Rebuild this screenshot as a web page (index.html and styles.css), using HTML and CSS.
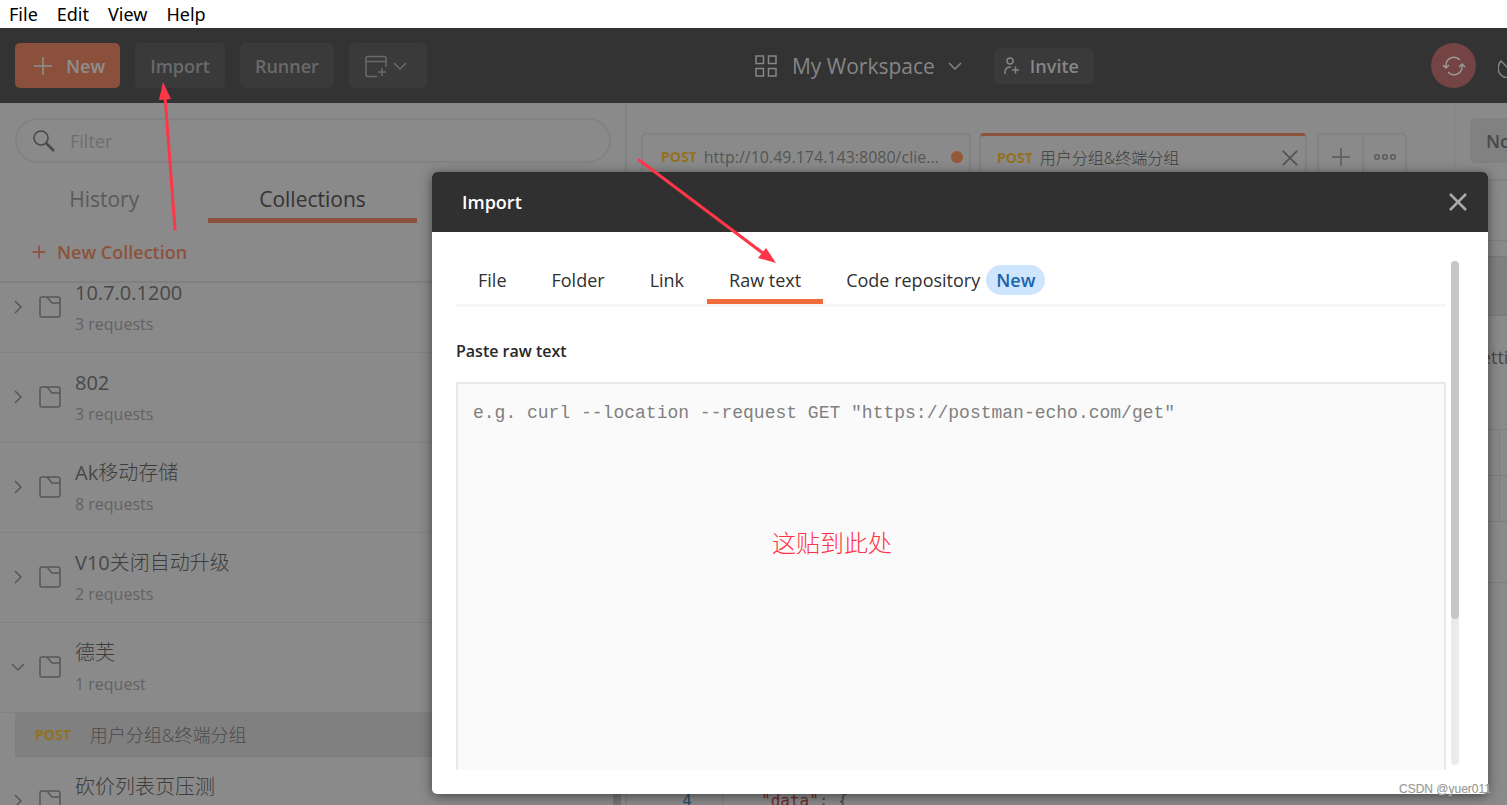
FILE: index.html
```html
<!DOCTYPE html>
<html lang="en">
<head>
<meta charset="utf-8">
<title>Import</title>
<link rel="stylesheet" href="styles.css">
</head>
<body>
<svg class="defs" width="0" height="0" aria-hidden="true">
  <symbol id="folder" viewBox="0 0 22 22"><path d="M3 1h16q2 0 2 2v16q0 2-2 2H3q-2 0-2-2V3q0-2 2-2zM8 1l5 6h8"/></symbol>
  <symbol id="right" viewBox="0 0 14 14"><path d="M4 1l6 6-6 6"/></symbol>
  <symbol id="down" viewBox="0 0 14 14"><path d="M1 4l6 6 6-6"/></symbol>
  <symbol id="close" viewBox="0 0 20 20"><path d="M2 2l16 16M18 2L2 18"/></symbol>
  <symbol id="plus" viewBox="0 0 20 20"><path d="M10 1v18M1 10h18"/></symbol>
</svg>

<nav class="menubar">
  <a href="#">File</a><a href="#">Edit</a><a href="#">View</a><a href="#">Help</a>
</nav>

<header class="header">
  <div class="actions">
    <button class="btn btn-new" type="button"><svg class="i20"><use href="#plus"/></svg>New</button>
    <button class="btn" type="button">Import</button>
    <button class="btn" type="button">Runner</button>
    <button class="btn btn-window" type="button" aria-label="Open new window">
      <svg class="i24" viewBox="0 0 24 24"><path d="M13 22.500H4q-2 0-2-2v-16q0-2 2-2h16q2 0 2 2V13M2 7.500h20M18 14v8M14 18h8"/></svg>
      <svg class="i14"><use href="#down"/></svg>
    </button>
  </div>
  <div class="workspace">
    <button class="workspace-name" type="button">
      <svg class="i22" viewBox="0 0 22 22"><path d="M1 1h7.500v7.500H1zM13.500 1H21v7.500h-7.500zM1 13.500h7.500V21H1zM13.500 13.500H21V21h-7.500z"/></svg>
      <span>My Workspace</span>
      <svg class="i14"><use href="#down"/></svg>
    </button>
    <button class="btn btn-invite" type="button">
      <svg class="i18" viewBox="0 0 18 18"><circle cx="7" cy="4" r="3"/><path d="M2 17v-2q0-5 6-5M12.500 9.500v7M9 13h7"/></svg>Invite
    </button>
  </div>
  <div class="status">
    <button class="sync" type="button" aria-label="Sync">
      <svg class="i24" viewBox="0 0 24 24"><path d="M4 14V11a8 8 0 0 1 14-5M1 11l3 3 3-3M20 10v3a8 8 0 0 1-14 5M17 13l3-3 3 3"/></svg>
    </button>
    <svg class="i24 satellite" viewBox="0 0 24 24"><path d="M3 7a9 9 0 1 0 14 14L3 7zM11 13l5-5"/></svg>
  </div>
</header>

<main class="main">
  <aside class="sidebar">
    <label class="filter">
      <svg class="i22" viewBox="0 0 22 22"><circle cx="8" cy="8" r="7"/><path class="handle" d="M13 13l8 8"/></svg>
      <input type="text" placeholder="Filter" aria-label="Filter">
    </label>
    <nav class="side-tabs">
      <a href="#">History</a><a href="#" class="on">Collections</a>
    </nav>
    <div class="new-row"><button type="button"><svg class="i14"><use href="#plus"/></svg>New Collection</button></div>
    <div class="scroller">
      <ul class="collections">
        <li class="collection"><svg class="i14"><use href="#right"/></svg><svg class="i22"><use href="#folder"/></svg><div><h3>10.7.0.1200</h3><p>3 requests</p></div></li>
        <li class="collection"><svg class="i14"><use href="#right"/></svg><svg class="i22"><use href="#folder"/></svg><div><h3>802</h3><p>3 requests</p></div></li>
        <li class="collection"><svg class="i14"><use href="#right"/></svg><svg class="i22"><use href="#folder"/></svg><div><h3>Ak<span class="han">移动存储</span></h3><p>8 requests</p></div></li>
        <li class="collection"><svg class="i14"><use href="#right"/></svg><svg class="i22"><use href="#folder"/></svg><div><h3>V10<span class="han">关闭自动升级</span></h3><p>2 requests</p></div></li>
        <li class="collection"><svg class="i14"><use href="#down"/></svg><svg class="i22"><use href="#folder"/></svg><div><h3><span class="han">德芙</span></h3><p>1 request</p></div></li>
        <li class="request"><b class="method">POST</b><span class="han">用户分组&amp;终端分组</span></li>
        <li class="collection"><svg class="i14"><use href="#right"/></svg><svg class="i22"><use href="#folder"/></svg><div><h3><span class="han">砍价列表页压测</span></h3><p></p></div></li>
      </ul>
      <div class="side-thumb"></div>
    </div>
  </aside>

  <section class="content">
    <div class="top">
      <div class="request-tabs">
        <div class="rtab"><b class="method">POST</b><span class="rname">http://10.49.174.143:8080/clie...</span><i class="dot"></i></div>
        <div class="rtab active"><b class="method">POST</b><span class="rname han">用户分组&amp;终端分组</span><button type="button" aria-label="Close tab"><svg class="i18"><use href="#close"/></svg></button></div>
        <div class="tab-tools">
          <button type="button" aria-label="New tab"><svg class="i20"><use href="#plus"/></svg></button>
          <button type="button" aria-label="More"><svg class="i22" viewBox="0 0 22 22"><circle cx="3" cy="11" r="2.300"/><circle cx="11" cy="11" r="2.300"/><circle cx="19" cy="11" r="2.300"/></svg></button>
        </div>
      </div>
      <div class="environment"><button type="button">No Environment</button></div>
    </div>
    <div class="request-name"></div>
    <div class="gap"></div>
    <div class="url-bar"></div>
    <div class="settings"><a href="#">Settings</a></div>
    <div class="params"><i></i><i></i><i></i><i></i></div>
    <div class="space"></div>
    <div class="code"><span class="line-no">4</span><code><span class="key">"data"</span>: {</code></div>
  </section>
</main>

<section class="modal" role="dialog" aria-labelledby="modal-title">
  <header class="modal-head">
    <h2 id="modal-title">Import</h2>
    <button type="button" aria-label="Close"><svg class="i20"><use href="#close"/></svg></button>
  </header>
  <div class="modal-body">
    <div class="pane">
      <nav class="tabs">
        <a href="#">File</a><a href="#">Folder</a><a href="#">Link</a><a href="#" class="on">Raw text</a><a href="#">Code repository<span class="badge">New</span></a>
      </nav>
      <label class="field-label" for="raw">Paste raw text</label>
      <textarea id="raw" placeholder='e.g. curl --location --request GET "https://postman-echo.com/get"'></textarea>
    </div>
    <div class="track"><div class="thumb"></div></div>
  </div>
</section>

<div class="note">这贴到此处</div>
<svg class="arrows" aria-hidden="true">
  <path class="shaft" d="M175 229L165 96M639 160L764 254"/>
  <path class="head" d="M163 82l8 17-12 1zM776 263l-18-5 8-10z"/>
</svg>
<div class="watermark">CSDN @yuer011</div>
</body>
</html>
```
FILE: styles.css
```css
* { box-sizing: border-box; }
html { height: 100%; }
body {
  position: relative;
  display: flex;
  flex-direction: column;
  height: 100%;
  margin: 0;
  overflow: hidden;
  background: #8a8a8a;
  color: #484848;
  font: 18px/24px "Open Sans", "Noto Sans CJK SC", sans-serif;
}
button { padding: 0; border: 0; background: none; color: inherit; font: inherit; }
a { color: inherit; text-decoration: none; }
h2, h3, p, ul { margin: 0; padding: 0; font-weight: 400; }
ul { list-style: none; }
svg { flex: none; fill: none; stroke: currentColor; stroke-width: 2; }
.han { font-weight: 300; }
.defs { position: absolute; }
.i14 { width: 14px; height: 14px; }
.i18 { width: 18px; height: 18px; }
.i20 { width: 20px; height: 20px; }
.i22 { width: 22px; height: 22px; }
.i24 { width: 24px; height: 24px; }

.menubar {
  display: flex;
  flex: none;
  gap: 19px;
  height: 28px;
  padding: 2px 9px;
  background: #fff;
  color: #000;
  font-family: "Noto Sans", sans-serif;
}

.header {
  display: flex;
  flex: none;
  align-items: center;
  justify-content: space-between;
  height: 75px;
  padding-left: 15px;
  background: #333;
  color: #868686;
}
.header svg { stroke-width: 1.5; }
.actions { display: flex; gap: 15px; }
.btn {
  display: flex;
  align-items: center;
  height: 45px;
  padding: 0 15px;
  border-radius: 5px;
  background: #3a3a3a;
  color: #6a6a6a;
  font-weight: 600;
}
.btn-new { gap: 13px; padding: 0 15px 0 18px; background: #8a503c; color: #8e8e8e; }
.btn-window { gap: 5px; padding: 0 20px 0 15px; }
.workspace { display: flex; align-items: center; gap: 32px; margin-right: 9px; }
.workspace-name { display: flex; align-items: center; gap: 15px; font-size: 21px; }
.workspace-name .i14 { margin-left: -2px; }
.btn-invite { gap: 9px; height: 36px; padding: 0 15px 0 9px; color: #868686; }
.status { display: flex; align-items: center; gap: 22px; width: 76px; overflow: hidden; }
.sync {
  display: flex;
  flex: none;
  align-items: center;
  justify-content: center;
  width: 45px;
  height: 45px;
  border-radius: 50%;
  background: #744343;
  color: #999;
}

.main { display: flex; flex: 1; min-height: 0; }
.sidebar {
  display: flex;
  flex: none;
  flex-direction: column;
  width: 627px;
  padding-top: 15px;
  border-right: 2px solid #828282;
}
.filter {
  display: flex;
  flex: none;
  align-items: center;
  gap: 15px;
  height: 45px;
  margin: 0 14px 0 15px;
  padding: 0 16px;
  border: 2px solid #828282;
  border-radius: 23px;
}
.filter svg { stroke-width: 1.5; }
.filter .handle { stroke-width: 2.5; }
.filter input { flex: 1; padding: 0; border: 0; outline: 0; background: none; font: inherit; }
.filter input::placeholder { color: #6e6e6e; opacity: 1; }
.side-tabs {
  display: grid;
  flex: none;
  grid-template-columns: repeat(3, 1fr);
  height: 60px;
  padding: 15px 0 2px;
  color: #5a5a5a;
  font-size: 21px;
  line-height: 42px;
  text-align: center;
}
.side-tabs a { height: 45px; }
.side-tabs .on { border-bottom: 5px solid #8d523d; color: #333; }
.new-row {
  display: flex;
  flex: none;
  align-items: center;
  height: 60px;
  padding-left: 32px;
  border-bottom: 2px solid #808080;
  color: #8d523d;
  font-weight: 600;
}
.new-row button { display: flex; align-items: center; gap: 11px; }
.new-row svg { stroke-width: 2.5; }
.scroller { position: relative; flex: 1; min-height: 0; overflow: hidden; }
.collections { margin-top: -20px; }
.collection {
  display: flex;
  height: 90px;
  padding: 17px 11px;
  border-bottom: 1px solid #828282;
}
.collection svg { stroke-width: 1.5; color: #575757; }
.collection .i14 { margin: 20px 14px 0 0; }
.collection .i22 { margin: 16px 14px 0 0; }
.collection h3 { font-size: 20px; line-height: 26px; }
.collection p { margin-top: 6px; color: #636363; font-size: 16px; line-height: 24px; }
.collection .han { color: #3c3c3c; }
.method { color: #93711f; font-size: 14px; font-weight: 700; }
.request {
  display: flex;
  align-items: center;
  gap: 19px;
  height: 44px;
  margin-left: 15px;
  padding-left: 20px;
  border-bottom: 1px solid #7d7d7d;
  background: #808080;
  color: #4c4c4c;
}
.side-thumb { position: absolute; right: 4px; bottom: 0; width: 8px; height: 60px; background: #747474; }

.content { display: flex; flex: 1; flex-direction: column; min-width: 0; }
.top { display: flex; flex: none; height: 78px; border-bottom: 2px solid #808080; }
.request-tabs { display: flex; flex: 1; align-items: flex-end; gap: 8px; padding-left: 14px; overflow: hidden; }
.rtab {
  display: flex;
  align-items: center;
  gap: 7px;
  width: 330px;
  height: 46px;
  padding: 0 6px 0 18px;
  border: 2px solid #828282;
  border-bottom: 0;
  border-radius: 5px 5px 0 0;
  color: #555;
  font-size: 16px;
}
.rtab.active { width: 328px; padding-left: 16px; border-top: 3px solid #8d523d; color: #3c3c3c; }
.rname { flex: 1; white-space: nowrap; }
.rtab button { display: flex; color: #555; }
.dot { flex: none; width: 12px; height: 12px; border-radius: 50%; background: #95593a; }
.tab-tools { display: flex; height: 46px; margin-left: 2px; border: 2px solid #828282; border-bottom: 0; border-radius: 5px 5px 0 0; }
.tab-tools svg { stroke-width: 1.5; color: #5b5b5b; }
.tab-tools button { display: flex; align-items: center; justify-content: center; width: 43px; }
.tab-tools button + button { border-left: 2px solid #828282; }
.environment { width: 53px; padding: 15px 0 0 15px; overflow: hidden; border-left: 1px solid #828282; }
.environment button { height: 45px; padding: 0 16px; border-radius: 5px; background: #818181; font-weight: 600; white-space: nowrap; }
.request-name { flex: none; height: 60px; border-bottom: 1px solid #7e7e7e; }
.gap { flex: none; height: 16px; border-bottom: 1px solid #7a7a7a; }
.url-bar { flex: none; height: 59px; border-bottom: 1px solid #7a7a7a; background: #808080; }
.settings { display: flex; flex: none; justify-content: flex-end; height: 114px; padding-top: 29px; overflow: hidden; border-bottom: 1px solid #7e7e7e; }
.settings a { width: 36px; }
.params { display: grid; flex: none; grid-template-columns: 1fr 7px; grid-auto-rows: 46px; height: 153px; border-bottom: 1px solid #7e7e7e; }
.params i { border-right: 1px solid #7e7e7e; border-bottom: 1px solid #7e7e7e; }
.params i:nth-child(even) { border-right: 0; }
.space { flex: 1; }
.code { display: flex; flex: none; height: 16px; font: 16px/24px "DejaVu Sans Mono", monospace; white-space: pre; overflow: hidden; }
.line-no { width: 96px; padding-right: 30px; border-right: 1px solid #7c7c7c; color: #274f68; text-align: right; }
.code code { padding-left: 38px; font: inherit; }
.key { color: #6d2a2a; }

.modal {
  position: absolute;
  inset: 172px 19px 11px 432px;
  display: flex;
  flex-direction: column;
  overflow: hidden;
  border-radius: 5px;
  background: #fff;
  box-shadow: 0 2px 12px rgba(0, 0, 0, .5);
  color: #303030;
}
.modal-head {
  display: flex;
  flex: none;
  align-items: center;
  justify-content: space-between;
  height: 60px;
  padding: 0 20px 0 30px;
  background: #303030;
  color: #fff;
}
.modal-head h2 { font-size: 18px; font-weight: 600; }
.modal-head button { display: flex; color: #aaa; }
.modal-head svg { stroke-width: 2.5; }
.modal-body { display: flex; flex: 1; gap: 5px; min-height: 0; padding: 29px 29px 24px 24px; }
.pane { display: flex; flex: 1; flex-direction: column; min-width: 0; }
.tabs { display: flex; flex: none; gap: 1px; height: 46px; border-bottom: 3px solid #f7f7f7; }
.tabs a { display: flex; align-items: center; height: 43px; padding: 0 22px 5px; white-space: nowrap; }
.tabs .on { padding-bottom: 0; border-bottom: 5px solid #f26b3a; }
.badge { height: 30px; margin-left: 6px; padding: 0 10px; border-radius: 15px; background: #cfe5fd; color: #1a62ab; font-weight: 600; line-height: 30px; }
.field-label { margin: 32px 0 19px; color: #282828; font-size: 16px; font-weight: 600; }
textarea {
  display: block;
  flex: 1;
  width: 100%;
  padding: 18px 15px;
  resize: none;
  border: 2px solid #e8e8e8;
  border-bottom: 0;
  outline: 0;
  background: #fafafa;
  font: 18px/22px "Liberation Mono", monospace;
}
textarea::placeholder { color: #808080; opacity: 1; }
.track { width: 8px; margin-bottom: 5px; border-radius: 4px; background: #ebebeb; }
.thumb { height: 71%; border-radius: 4px; background: #c6c6c6; }

.note { position: absolute; top: 524px; left: 772px; color: #ff3347; font: 300 24px/36px "Noto Sans CJK SC", sans-serif; }
.arrows { position: absolute; inset: 0; width: 100%; height: 100%; pointer-events: none; }
.shaft { stroke: #ff3648; stroke-width: 3; stroke-linecap: round; }
.head { fill: #ff3648; stroke: none; }
.watermark { position: absolute; right: 16px; bottom: 6px; color: #999; font: 12px/20px "Liberation Sans", Arial, sans-serif; text-shadow: 0 0 1px #ddd; }
```
